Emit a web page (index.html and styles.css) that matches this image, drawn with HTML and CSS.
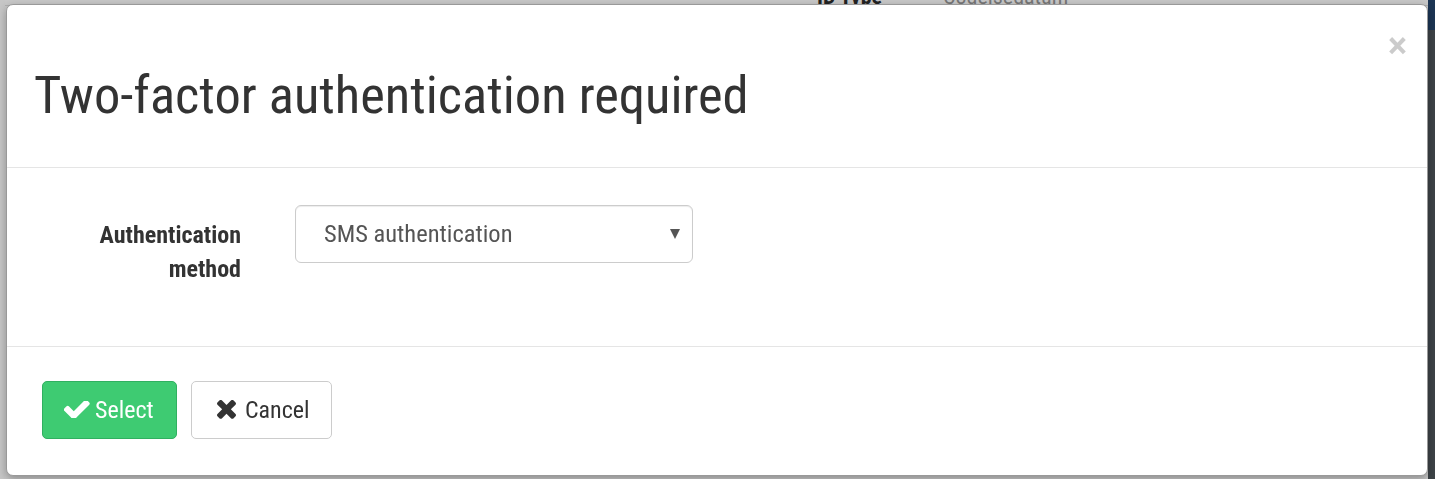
FILE: index.html
```html
<!DOCTYPE html>
<html lang="en">

<head>
    <meta charset="UTF-8">
    <meta name="viewport" content="width=device-width, initial-scale=1.0">
    <title>Two-factor authentication</title>
    <link rel="stylesheet" href="styles.css">
</head>

<body>
    <!-- page behind the dialog (only its edges show) -->
    <div class="page">
        <div class="page-main">
            <div class="table-head">
                <span class="th th-id">ID Type</span>
                <span class="th">Codeisedatum</span>
            </div>
        </div>
        <div class="page-side"></div>
    </div>

    <!-- the dialog -->
    <div class="modal">
        <header class="modal-header">
            <h1 class="modal-title">Two-factor authentication required</h1>
            <button class="close" type="button">&times;</button>
        </header>

        <section class="modal-body">
            <div class="form-row">
                <label class="control-label" for="method">Authentication method</label>
                <div class="select-wrap">
                    <select id="method" class="form-control">
                        <option>SMS authentication</option>
                    </select>
                    <span class="caret"></span>
                </div>
            </div>
        </section>

        <footer class="modal-footer">
            <button type="button" class="btn btn-success">
                <svg class="icon icon-check" viewBox="147 410 1524 1016">
                    <path fill="currentColor"
                        d="M1671 566q0 40-28 68l-724 724-136 136q-28 28-68 28t-68-28l-136-136-362-362q-28-28-28-68t28-68l136-136q28-28 68-28t68 28l294 295 656-657q28-28 68-28t68 28l136 136q28 28 28 68z" />
                </svg>Select
            </button>
            <button type="button" class="btn btn-default">
                <svg class="icon icon-times" viewBox="110 384 1188 1170">
                    <path fill="currentColor"
                        d="M1298 1322q0 40-28 68l-136 136q-28 28-68 28t-68-28l-294-294-294 294q-28 28-68 28t-68-28l-136-136q-28-28-28-68t28-68l294-294-294-294q-28-28-28-68t28-68l136-136q28-28 68-28t68 28l294 294 294-294q28-28 68-28t68 28l136 136q28 28 28 68t-28 68l-294 294 294 294q28 28 28 68z" />
                </svg>Cancel
            </button>
        </footer>
    </div>
</body>

</html>
```

FILE: styles.css
```css
html,
body {
    margin: 0;
    height: 100%;
}

body {
    font-family: "Roboto", "Liberation Sans", sans-serif;
    font-stretch: 75%;
    color: #333;
    background-color: #c9c9c9;
    overflow: hidden;
}

/* page behind the dialog */
.page {
    display: flex;
    height: 100%;
}

.page-main {
    flex: 1;
    background-color: #c8c8c8;
    border-left: 5px solid #c6c6c6;
}

.page-side {
    width: 7px;
    background: linear-gradient(#1c3554 0, #1c3554 30px, #3d4347 30px);
}

.table-head {
    display: flex;
    height: 5px;
    overflow: hidden;
    border-bottom: 1px solid #b0b0b0;
    padding-left: 812px;
}

.th {
    font-size: 22px;
    line-height: 18px;
    margin-top: -12px;
    color: #777;
}

.th-id {
    font-weight: bold;
    color: #222;
    width: 126px;
}

/* dialog */
.modal {
    position: fixed;
    left: 6px;
    top: 4px;
    width: 1420px;
    height: 470px;
    background-color: #fff;
    border: 1px solid #999;
    border-radius: 7px;
    box-shadow: 0 3px 9px rgba(0, 0, 0, 0.3);
    display: flex;
    flex-direction: column;
}

.modal-header {
    display: flex;
    justify-content: space-between;
    align-items: flex-start;
    padding: 0 20px 0 27px;
    border-bottom: 1px solid #e5e5e5;
}

.modal-title {
    margin: 62px 0 42px;
    font-size: 52.5px;
    font-weight: normal;
    line-height: 1.1;
    color: #333;
}

.close {
    margin-top: 23px;
    padding: 0;
    border: 0;
    background: none;
    font-family: inherit;
    font-size: 36px;
    font-weight: bold;
    line-height: 1;
    color: #000;
    opacity: 0.2;
    cursor: pointer;
}

.modal-body {
    padding: 37px 0 60px 34px;
    border-bottom: 1px solid #e5e5e5;
}

.form-row {
    display: flex;
    align-items: flex-start;
    gap: 54px;
}

.control-label {
    width: 200px;
    padding-top: 13px;
    text-align: right;
    font-size: 24px;
    font-weight: bold;
    line-height: 34px;
    color: #333;
}

.select-wrap {
    position: relative;
}

.form-control {
    display: block;
    width: 398px;
    height: 58px;
    padding: 0 40px 0 28px;
    font-family: inherit;
    font-stretch: 75%;
    font-size: 24.5px;
    color: #555;
    background-color: #fff;
    border: 1px solid #ccc;
    border-radius: 6px;
    box-shadow: inset 0 1px 1px rgba(0, 0, 0, 0.075);
    appearance: none;
    -webkit-appearance: none;
}

.caret {
    position: absolute;
    right: 13px;
    top: 24px;
    width: 0;
    height: 0;
    border-left: 5px solid transparent;
    border-right: 5px solid transparent;
    border-top: 10px solid #555;
    pointer-events: none;
}

.modal-footer {
    display: flex;
    gap: 14px;
    padding: 34px 35px;
}

.btn {
    display: flex;
    align-items: center;
    height: 58px;
    padding: 0 21px;
    font-family: inherit;
    font-stretch: 75%;
    font-size: 24px;
    border-radius: 5px;
    cursor: pointer;
}

.btn-success {
    width: 135px;
    color: #fff;
    background-color: #3ecb72;
    border: 1px solid #30b060;
}

.btn-default {
    width: 141px;
    color: #333;
    background-color: #fff;
    border: 1px solid #ccc;
    padding-left: 25px;
}

.icon {
    flex: none;
}

.icon-check {
    width: 26px;
    height: 17px;
    margin-right: 5px;
}

.icon-times {
    width: 19px;
    height: 19px;
    margin-right: 9px;
}
```
